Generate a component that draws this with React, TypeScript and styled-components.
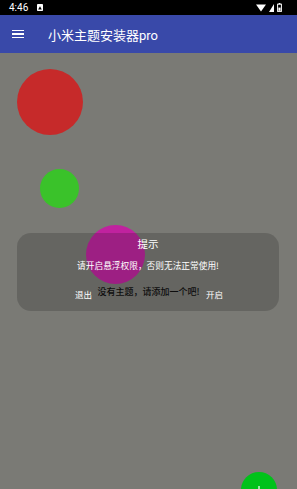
import styled, { createGlobalStyle } from "styled-components";

const GlobalStyle = createGlobalStyle`
  html, body {
    margin: 0;
    padding: 0;
    background: #7a7a75;
  }
  body {
    font-family: Roboto, "Noto Sans CJK SC", sans-serif;
  }
`;

export default function App() {
  return (
    <>
      <GlobalStyle />
      <StyledScreen>
        <StyledStatusBar>
          <StyledStatusLeft>
            <StyledTime>4:46</StyledTime>
            <svg width="6" height="7" viewBox="0 0 6 7">
              <rect x="0" y="0" width="6" height="7" rx="0.8" fill="#fff" />
              <path d="M1.2 5.6 L3 2.2 L4.8 5.6 Z" fill="#000" />
            </svg>
          </StyledStatusLeft>
          <StyledStatusRight>
            <svg width="10" height="8" viewBox="0 0 10 8">
              <path d="M0 0.5 L10 0.5 L5 7.5 Z" fill="#fff" />
            </svg>
            <svg width="5" height="8" viewBox="0 0 5 8">
              <path d="M5 0 L5 8 L0 8 Z" fill="#fff" />
            </svg>
            <svg width="5" height="9" viewBox="0 0 5 9">
              <rect x="0.6" y="1.2" width="3.8" height="7.2" fill="none" stroke="#fff" strokeWidth="1" />
              <rect x="1.6" y="0" width="1.8" height="1.2" fill="#fff" />
              <rect x="1.4" y="4.6" width="2.2" height="3.2" fill="#fff" />
            </svg>
          </StyledStatusRight>
        </StyledStatusBar>

        <StyledToolbar>
          <StyledMenuBtn>
            <span />
            <span />
            <span />
          </StyledMenuBtn>
          <StyledTitle>小米主题安装器pro</StyledTitle>
        </StyledToolbar>

        <StyledContent>
          <StyledBall $color="#c62a2a" $size={66} $left={17} $top={16} />
          <StyledBall $color="#3ac22a" $size={39} $left={40} $top={116} />
          <StyledBall $color="#c0229f" $size={59} $left={86} $top={172} />
          <StyledEmpty>没有主题，请添加一个吧!</StyledEmpty>

          <StyledDialog>
            <StyledDialogTitle>提示</StyledDialogTitle>
            <StyledDialogMessage>请开启悬浮权限，否则无法正常使用!</StyledDialogMessage>
            <StyledDialogActions>
              <StyledDialogBtn>退出</StyledDialogBtn>
              <StyledDialogBtn>开启</StyledDialogBtn>
            </StyledDialogActions>
          </StyledDialog>

          <StyledFab>
            <svg width="10" height="10" viewBox="0 0 10 10">
              <path d="M5 1 V9 M1 5 H9" stroke="#fff" strokeWidth="1.2" />
            </svg>
          </StyledFab>
        </StyledContent>
      </StyledScreen>
    </>
  );
}

const StyledScreen = styled.div`
  width: 297px;
  height: 489px;
  display: flex;
  flex-direction: column;
  overflow: hidden;
  background: #7a7a75;
`;

/**
 * Status bar
 */
const StyledStatusBar = styled.div`
  height: 15px;
  background: #000;
  display: flex;
  justify-content: space-between;
  align-items: center;
  padding: 0 15px 0 9px;
  flex-shrink: 0;
`;
const StyledStatusLeft = styled.div`
  display: flex;
  align-items: center;
  gap: 9px;
`;
const StyledTime = styled.span`
  color: #fff;
  font-size: 10px;
  line-height: 1;
  font-family: Roboto, sans-serif;
`;
const StyledStatusRight = styled.div`
  display: flex;
  align-items: center;
  gap: 3px;
`;

/**
 * Toolbar
 */
const StyledToolbar = styled.header`
  height: 38px;
  background: #3949a9;
  display: flex;
  align-items: center;
  padding-left: 12px;
  gap: 24px;
  flex-shrink: 0;
`;
const StyledMenuBtn = styled.div`
  width: 12px;
  display: flex;
  flex-direction: column;
  gap: 2px;
  span {
    display: block;
    height: 1.2px;
    background: #fff;
  }
`;
const StyledTitle = styled.h1`
  margin: 0;
  color: #fff;
  font-size: 13px;
  font-weight: 400;
  font-family: Roboto, "Noto Sans CJK SC", sans-serif;
`;

/**
 * Content
 */
const StyledContent = styled.main`
  position: relative;
  flex: 1;
  display: flex;
  flex-direction: column;
  align-items: center;
  padding-top: 232px;
`;
const StyledBall = styled.div<{ $color: string; $size: number; $left: number; $top: number }>`
  position: absolute;
  left: ${({ $left }) => $left}px;
  top: ${({ $top }) => $top}px;
  width: ${({ $size }) => $size}px;
  height: ${({ $size }) => $size}px;
  border-radius: 50%;
  background: ${({ $color }) => $color};
`;
const StyledEmpty = styled.p`
  margin: 0;
  font-size: 9px;
  line-height: 14px;
  color: #0c0c0c;
  font-weight: 500;
  font-family: "Noto Sans CJK SC", sans-serif;
`;

const StyledDialog = styled.div`
  position: absolute;
  left: 17px;
  top: 180px;
  width: 262px;
  height: 78px;
  box-sizing: border-box;
  border-radius: 14px;
  background: rgba(20, 22, 22, 0.2);
  display: flex;
  flex-direction: column;
  align-items: center;
  padding-top: 4px;
  color: #fff;
  font-family: "Noto Sans CJK SC", sans-serif;
`;
const StyledDialogTitle = styled.div`
  font-size: 10.5px;
  line-height: 14px;
`;
const StyledDialogMessage = styled.div`
  margin-top: 9px;
  font-size: 8.7px;
  line-height: 12px;
`;
const StyledDialogActions = styled.div`
  margin-top: 16px;
  width: 100%;
  display: flex;
`;
const StyledDialogBtn = styled.div`
  flex: 1;
  text-align: center;
  font-size: 8.5px;
  line-height: 12px;
  padding-left: 2px;
`;

const StyledFab = styled.div`
  position: absolute;
  left: 241px;
  top: 419px;
  width: 36px;
  height: 36px;
  border-radius: 50%;
  background: #00c21a;
  display: flex;
  align-items: center;
  justify-content: center;
`;
